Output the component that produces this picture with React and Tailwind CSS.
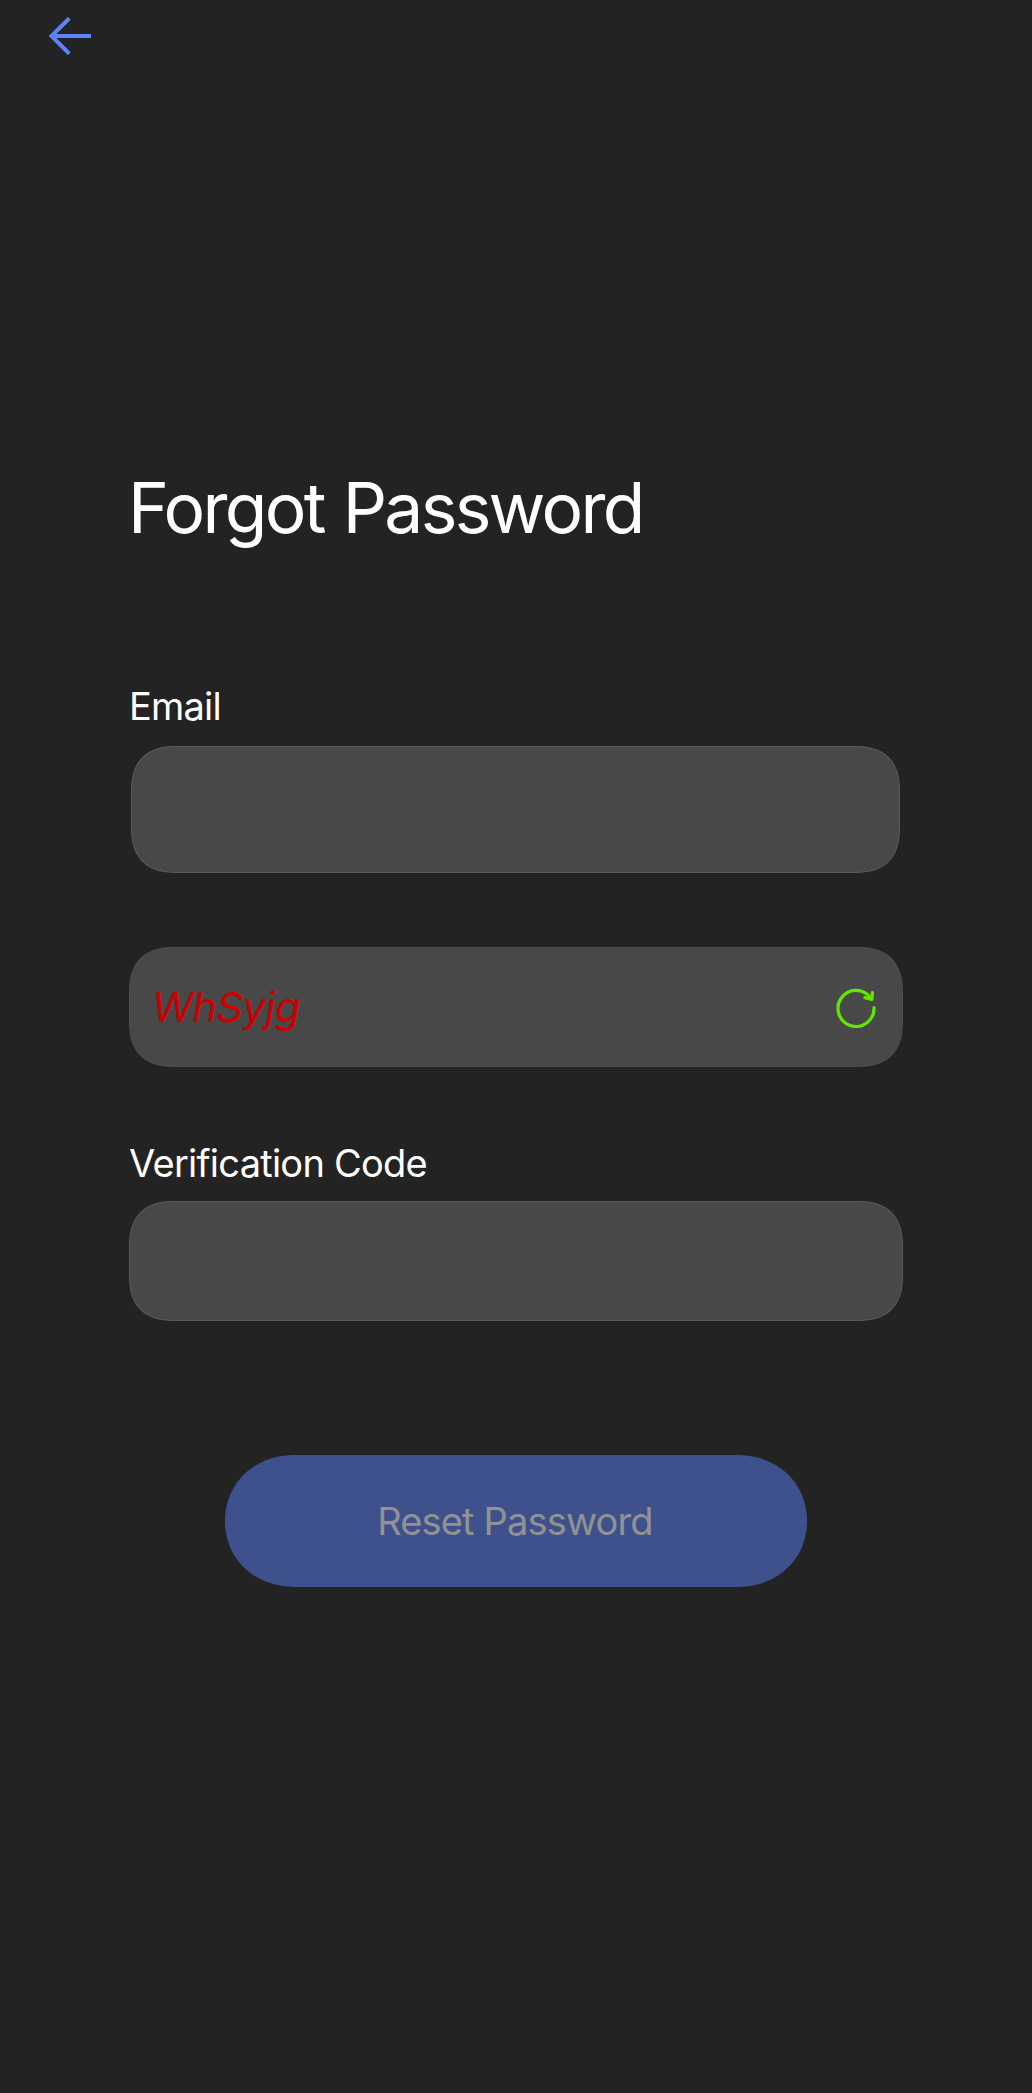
import React, { useState } from 'react';

const BackIcon = () => (
  <svg width="44" height="38" viewBox="0 0 44 38" fill="none" stroke="#5b83fb" strokeWidth="4">
    <path d="M22.3 1.3 L4.5 19 L22.3 36.7" />
    <path d="M4 19 H44" />
  </svg>
);

const RefreshIcon = () => (
  <svg
    width="40"
    height="40"
    viewBox="0 0 40 40"
    fill="none"
    stroke="#62e800"
    strokeWidth="3.2"
    strokeLinecap="round"
    strokeLinejoin="round"
  >
    <path d="M38 19.5 A18 18 0 1 1 34.4 9.6" />
    <path d="M28.8 9.6 L35.9 11.4 L36.4 4.6" />
  </svg>
);

const inputClass =
  'block bg-[#484848] border border-[#5a5a5a] rounded-[47px] [corner-shape:superellipse(1.35)] px-6 text-[38px] text-white outline-none';

const App = () => {
  const [email, setEmail] = useState('');
  const [code, setCode] = useState('');

  return (
    <div className="min-h-[2093px] bg-[#232323] font-['Inter',sans-serif] text-white">
      <header className="h-[72px] pl-[47px] pt-[17px]">
        <button aria-label="Back" className="block">
          <BackIcon />
        </button>
      </header>

      <main className="mx-[129px] flex flex-col pt-[386px]">
        <h1 className="-ml-px h-[100px] whitespace-nowrap text-[69.5px] leading-[100px] tracking-[-2.7px] [word-spacing:2px]">
          Forgot Password
        </h1>

        <label htmlFor="email" className="mt-[123px] h-[50px] whitespace-nowrap text-[38px] leading-[50px] tracking-[-0.8px]">
          Email
        </label>
        <input
          id="email"
          type="email"
          value={email}
          onChange={(e) => setEmail(e.target.value)}
          className={`${inputClass} mx-[2px] mt-[15px] h-[127px] w-[769px]`}
        />

        <div className="mt-[74px] flex h-[120px] items-center justify-between rounded-[47px] border border-[#4c4c4c] bg-[#484848] pl-[22px] pr-[26px] pt-px [corner-shape:superellipse(1.35)]">
          <span className="whitespace-nowrap text-[41.5px] italic leading-none tracking-[-0.5px] text-[#cc0000]">WhSyjg</span>
          <button aria-label="Refresh code">
            <RefreshIcon />
          </button>
        </div>

        <label htmlFor="code" className="mt-[71px] h-[50px] whitespace-nowrap text-[38px] leading-[50px] tracking-[-0.75px]">
          Verification Code
        </label>
        <input
          id="code"
          type="text"
          value={code}
          onChange={(e) => setCode(e.target.value)}
          className={`${inputClass} mt-[13px] h-[120px] w-full`}
        />

        <button
          disabled
          className="mt-[134px] h-[132px] w-[582px] self-center whitespace-nowrap rounded-[70px/66px] bg-[#3f518d] pr-[2px] text-[38px] tracking-[-0.83px] text-[#929292] [corner-shape:superellipse(1.06)]"
        >
          Reset Password
        </button>
      </main>
    </div>
  );
};

export default App;
